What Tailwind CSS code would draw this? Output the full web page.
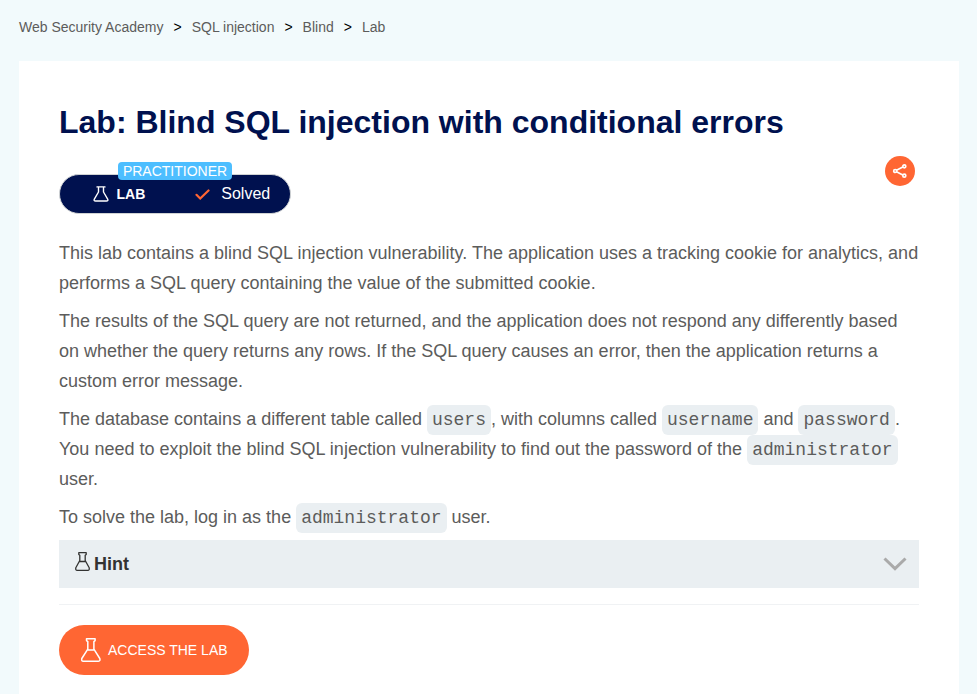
<!DOCTYPE html>
<html lang="en">
<head>
<meta charset="utf-8">
<title>Lab: Blind SQL injection with conditional errors</title>
<script src="https://cdn.jsdelivr.net/npm/@tailwindcss/browser@4"></script>
</head>
<body class="h-[694px] overflow-hidden bg-[#f2fafc] font-['Liberation_Sans',Arial,sans-serif] text-[#5c5c5b]">
<nav class="flex h-[61px] items-start gap-[10px] pl-[19px] pt-[17px] text-sm leading-5">
  <a>Web Security Academy</a><span class="text-black">&gt;</span><a>SQL injection</a><span class="text-black">&gt;</span><a>Blind</a><span class="text-black">&gt;</span><a>Lab</a>
</nav>
<main class="ml-[19px] h-[633px] w-[940px] bg-white px-10 pt-10">
  <h1 class="text-[32px] leading-[42px] font-bold text-[#00114f]">Lab: Blind SQL injection with conditional errors</h1>
  <div class="flex h-[95px] items-start justify-between">
    <div class="relative mt-[31px] flex h-[40px] w-[232px] items-center rounded-full border border-[#d0d3d4] bg-[#00114f] text-white">
      <svg class="ml-[33px] h-4 w-4 shrink-0" viewBox="0 0 16 16" fill="none" stroke="currentColor" stroke-width="1.4" stroke-linejoin="round" stroke-linecap="round"><path d="M4 .9h8M5.500 1v5L1.200 13.400Q.7 15 2.500 15h11Q15.300 15 14.800 13.400L10.500 6V1"/></svg>
      <span class="ml-[7.500px] text-sm font-bold">LAB</span>
      <svg class="ml-[50px] h-[11px] w-[15px] shrink-0" viewBox="0 0 15 11" fill="none" stroke="#ff6633" stroke-width="2.2" stroke-linecap="round"><path d="M1.500 5.800 5.200 9.500 13.500 1.500"/></svg>
      <span class="ml-[11px] text-base">Solved</span>
      <span class="absolute left-[58px] top-[-13px] h-[18px] w-[114px] rounded-[4px] bg-[#4dbeff] text-center text-sm leading-[19px]">PRACTITIONER</span>
    </div>
    <button class="mt-[13px] mr-1 flex h-[30px] w-[30px] items-center justify-center rounded-full bg-[#ff6633]" aria-label="Share">
      <svg class="h-[16px] w-[16px]" viewBox="0 0 16 16" fill="none" stroke="#fff" stroke-width="1.700"><circle cx="3.200" cy="8" r="1.500"/><circle cx="12.300" cy="3.300" r="1.500"/><circle cx="12.300" cy="12.700" r="1.500"/><path d="m4.500 7.200 6.300-3.100M4.500 8.800l6.300 3.100"/></svg>
    </button>
  </div>
  <div class="space-y-2 text-lg leading-[30px]">
    <p>This lab contains a blind SQL injection vulnerability. The application uses a tracking cookie for analytics, and performs a SQL query containing the value of the submitted cookie.</p>
    <p>The results of the SQL query are not returned, and the application does not respond any differently based on whether the query returns any rows. If the SQL query causes an error, then the application returns a custom error message.</p>
    <p>The database contains a different table called <code class="rounded-md bg-[#eaeff2] p-[5px] font-['Liberation_Mono',monospace] text-lg leading-none">users</code>, with columns called <code class="rounded-md bg-[#eaeff2] p-[5px] font-['Liberation_Mono',monospace] text-lg leading-none">username</code> and <code class="rounded-md bg-[#eaeff2] p-[5px] font-['Liberation_Mono',monospace] text-lg leading-none">password</code>. You need to exploit the blind SQL injection vulnerability to find out the password of the <code class="rounded-md bg-[#eaeff2] p-[5px] font-['Liberation_Mono',monospace] text-lg leading-none">administrator</code> user.</p>
    <p>To solve the lab, log in as the <code class="rounded-md bg-[#eaeff2] p-[5px] font-['Liberation_Mono',monospace] text-lg leading-none">administrator</code> user.</p>
  </div>
  <div class="mt-2 flex h-12 items-center bg-[#eaeff2] pl-4 pr-3 text-[#333332]">
    <svg class="mb-[6px] h-[19px] w-[15px]" viewBox="0 0 15 19" fill="none" stroke="currentColor" stroke-width="1.300" stroke-linejoin="round"><path d="M3.800.7h7.400v1.800l-1 .8v5.200l4 7.300q.4 2.500-1.300 2.500H2.100Q.4 18.300.8 15.800l4-7.300V3.300l-1-.8zM4.500 9.500h6"/></svg>
    <span class="ml-1 text-lg font-bold">Hint</span>
    <svg class="ml-auto h-[14px] w-[24px]" viewBox="0 0 24 14" fill="none" stroke="#aaa" stroke-width="3"><path d="m1.500 1.500 10.500 10.200L22.500 1.500"/></svg>
  </div>
  <hr class="mt-4 mb-5 border-t border-[#f0f2f4]">
  <a class="flex h-[50px] w-[190px] items-center rounded-full bg-[#ff6633] pl-[22px] text-sm text-white">
    <svg class="h-[24px] w-[20px]" viewBox="0 0 20 24" fill="none" stroke="currentColor" stroke-width="1.500" stroke-linejoin="round"><path d="M5.500.8h8.600v1.800l-1.200 1v7.600L18.800 20.500Q19.500 23.200 17.500 23.200H2.300Q.2 23.200.8 20.500l6-9.300V3.600l-1.300-1zM6.400 12h7"/></svg>
    <span class="ml-[7px]">ACCESS THE LAB</span>
  </a>
</main>
</body>
</html>
